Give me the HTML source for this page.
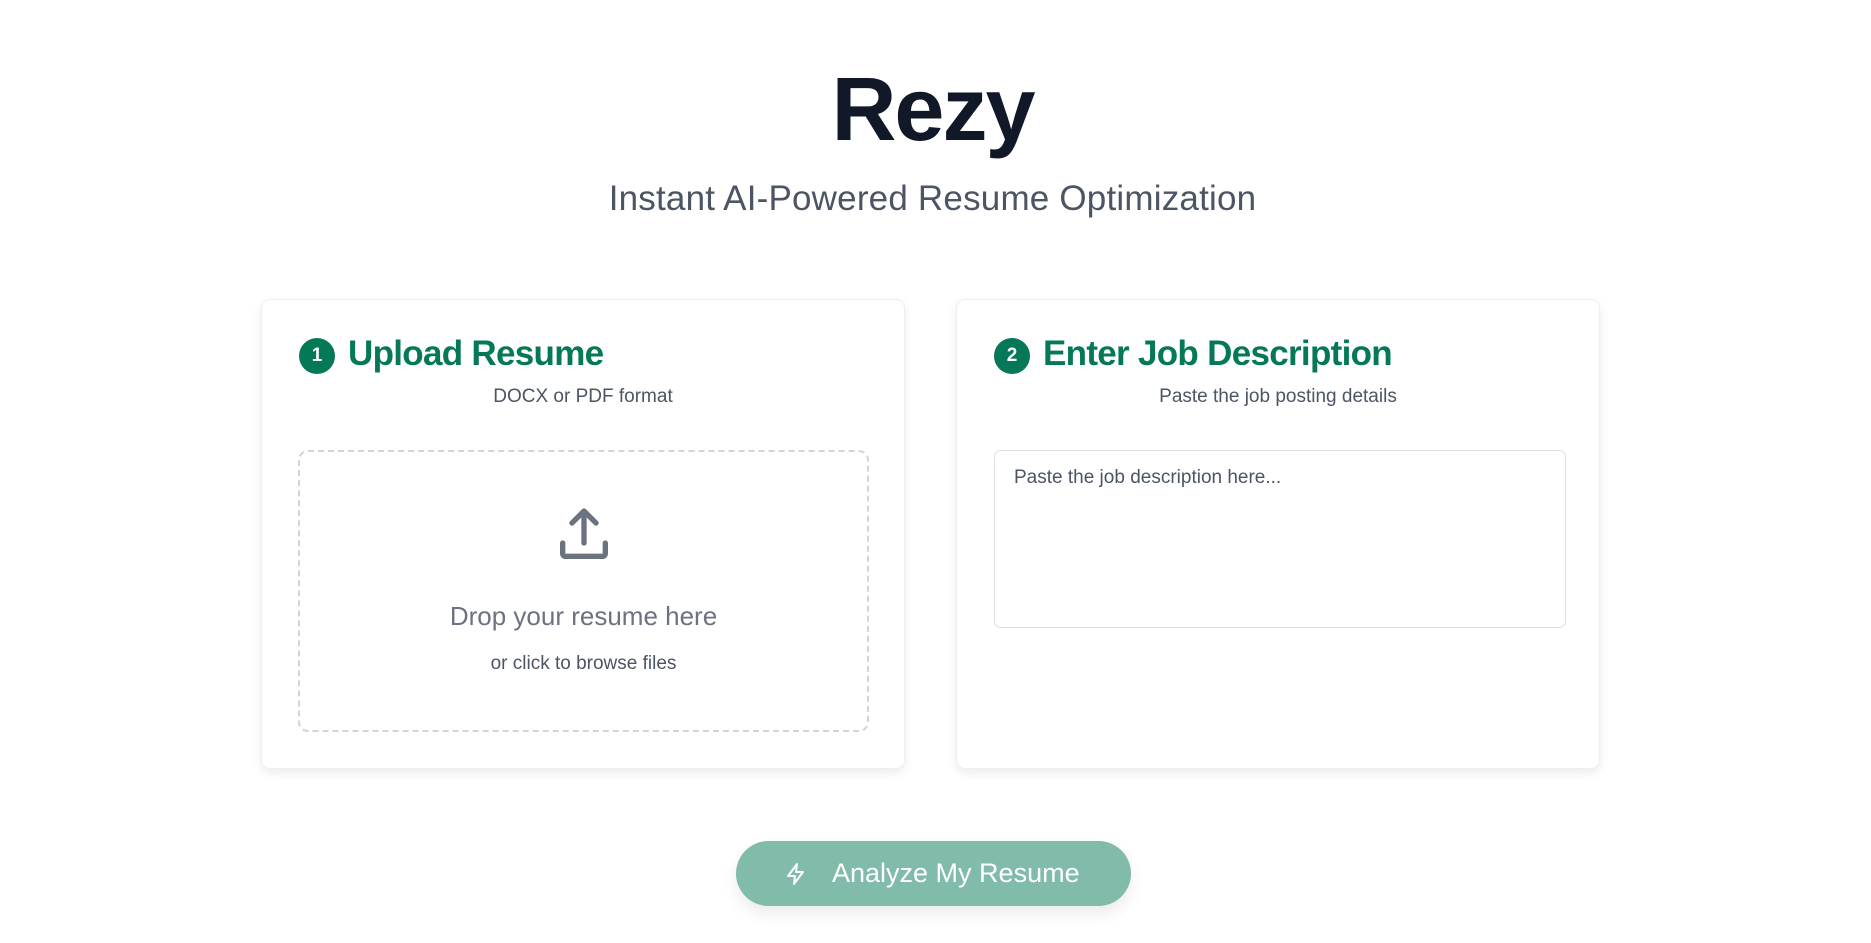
<!DOCTYPE html>
<html><head><meta charset="utf-8"><style>
*{box-sizing:border-box;margin:0;padding:0}
body{width:1871px;height:943px;background:#fff;font-family:"Liberation Sans",Arial,sans-serif;position:relative;overflow:hidden}
.abs{position:absolute}
h1{position:absolute;left:0;width:1871px;top:59px;text-align:center;font-size:90px;font-weight:bold;color:#111827;letter-spacing:-2px;padding-right:6px}
.sub{position:absolute;left:0;width:1871px;top:179px;text-align:center;font-size:35px;color:#4b5563;padding-right:6px;letter-spacing:.2px}
.card{position:absolute;top:299px;width:644px;height:470px;background:#fff;border:1px solid #eeeff1;border-radius:9px;box-shadow:0 4px 10px rgba(0,0,0,.08)}
.num{position:absolute;left:37px;top:38px;width:36px;height:36px;border-radius:50%;background:#047857;color:#fff;font-weight:bold;font-size:19px;text-align:center;line-height:36px}
.ht{position:absolute;left:86px;top:34px;font-size:35px;font-weight:bold;color:#047857;letter-spacing:-.7px}
.hs{position:absolute;left:0;width:100%;top:86px;text-align:center;font-size:19px;color:#4b5563}
.drop{position:absolute;left:36px;top:150px;width:571px;height:282px;border:2px dashed #d1d5db;border-radius:10px;text-align:center}
.ta{position:absolute;left:37px;top:150px;width:572px;height:178px;border:1.5px solid #dcdfe4;border-radius:7px;padding:16px 19px;font-size:19px;color:#4b5563}
.btn{position:absolute;width:395px;height:65px;border-radius:33px;background:#81bbaa;color:#fff;font-size:27px;box-shadow:0 8px 16px rgba(0,0,0,.08)}
</style></head><body>
<h1>Rezy</h1>
<div class="sub">Instant AI-Powered Resume Optimization</div>
<div class="card" style="left:261px">
 <div class="num">1</div><div class="ht">Upload Resume</div>
 <div class="hs">DOCX or PDF format</div>
 <div class="drop">
  <svg class="abs" style="left:252px;top:51px" width="64" height="64" viewBox="0 0 24 24" fill="none" stroke="#6b7280" stroke-width="2" stroke-linecap="round" stroke-linejoin="round"><path d="M4 15v4a1 1 0 0 0 1 1h14a1 1 0 0 0 1-1v-4"/><path d="M12 15V3"/><path d="M7.5 7.5L12 3l4.5 4.5"/></svg>
  <div class="abs" style="left:0;width:100%;top:149px;font-size:26px;color:#6b7280">Drop your resume here</div>
  <div class="abs" style="left:0;width:100%;top:201px;font-size:19px;color:#4b5563">or click to browse files</div>
 </div>
</div>
<div class="card" style="left:956px">
 <div class="num">2</div><div class="ht">Enter Job Description</div>
 <div class="hs">Paste the job posting details</div>
 <div class="ta">Paste the job description here...</div>
</div>
<div class="btn" style="left:736px;top:841px">
 <svg class="abs" style="left:48px;top:21px" width="24" height="24" viewBox="0 0 24 24" fill="none" stroke="#fff" stroke-width="2" stroke-linejoin="round"><path d="M13 2L4 14h7l-1 8 9-12h-7z"/></svg>
 <div class="abs" style="left:96px;top:17px">Analyze My Resume</div>
</div>
</body></html>
